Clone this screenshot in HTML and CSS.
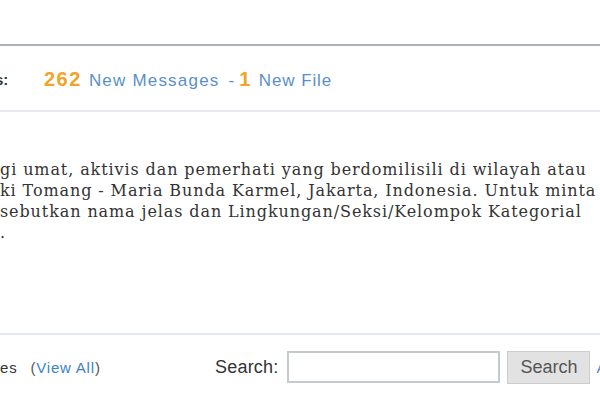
FILE: index.html
```html
<!DOCTYPE html>
<html>
  <head>
    <title>Group Info</title>
    <link rel="stylesheet" href="styles.css">
  </head>
  <body>
    <div class="page">
      <div class="header-space"></div>
      <div class="activity">
        <span class="label">s:</span>
        <span class="counts">
          <b class="num">262</b><a class="link" href="#">New Messages</a><span class="dash">-</span><b class="num">1</b><a class="link" href="#">New File</a>
        </span>
      </div>
      <div class="description">
        gi umat, aktivis dan pemerhati yang berdomilisili di wilayah atau<br />
        ki Tomang - Maria Bunda Karmel, Jakarta, Indonesia. Untuk minta<br />
        sebutkan nama jelas dan Lingkungan/Seksi/Kelompok Kategorial<br />
        .
      </div>
      <div class="footer">
        <div class="files">es <span class="viewall">(<a href="#">View All</a>)</span></div>
        <form class="search" onsubmit="return false">
          <label for="q">Search:</label>
          <input id="q" class="searchbox" type="text" />
          <input class="searchbutton" type="submit" value="Search" />
          <a class="adv" href="#">A</a>
        </form>
      </div>
    </div>
  </body>
</html>
```

FILE: styles.css
```css
body {
  margin: 0;
  background: #ffffff;
  font-family: "Liberation Sans", Arial, sans-serif;
  color: #333333;
  overflow: hidden;
}

.page {
  width: 600px;
  overflow: hidden;
}

.header-space {
  height: 44px;
}

.activity {
  border-top: 2px solid #a9b1b9;
  border-bottom: 2px solid #e6eaee;
  height: 64px;
  display: flex;
  align-items: center;
  white-space: nowrap;
}

.label {
  flex: none;
  font-weight: bold;
  font-size: 15px;
  color: #333333;
  width: 49px;
  margin-left: -5px;
  margin-top: 3px;
}

.counts {
  font-size: 17px;
  margin-top: 3px;
}

.link {
  color: #5b8fca;
  text-decoration: none;
  letter-spacing: 1.2px;
}

.num {
  color: #f0a428;
  font-size: 20px;
  letter-spacing: 1.5px;
  margin-right: 7px;
}

.dash {
  color: #5b8fca;
  margin: 0 5px 0 9px;
}

.num + .link + .dash + .num + .link {
  letter-spacing: 0.9px;
}

.description {
  font-family: "DejaVu Serif", Georgia, serif;
  font-size: 16px;
  letter-spacing: 0.9px;
  line-height: 21px;
  color: #333333;
  padding-top: 47px;
  height: 174px;
  white-space: nowrap;
}

.footer {
  border-top: 2px solid #e1e8ef;
  display: flex;
  align-items: center;
  height: 64px;
  white-space: nowrap;
}

.files {
  flex: none;
  font-size: 15px;
  width: 215px;
  letter-spacing: 0.8px;
}

.viewall {
  color: #555555;
  margin-left: 8px;
}

.viewall a {
  color: #3b84c4;
  text-decoration: none;
}

.search {
  flex: none;
  display: flex;
  align-items: center;
}

.search label {
  font-size: 18px;
  letter-spacing: 0.2px;
  margin-right: 9px;
}

.searchbox {
  flex: none;
  box-sizing: border-box;
  width: 213px;
  height: 32px;
  border: 2px solid #c4cace;
  padding: 0 2px;
  margin: 0 7px 0 0;
}

.searchbutton {
  flex: none;
  box-sizing: border-box;
  width: 83px;
  height: 33px;
  background: #e2e2e2;
  border: 1px solid #cccccc;
  color: #555555;
  font-family: "Liberation Sans", Arial, sans-serif;
  font-size: 18px;
  margin: 0 6px 0 0;
}

.adv {
  color: #5b8fca;
  text-decoration: none;
  font-size: 15px;
}
```
